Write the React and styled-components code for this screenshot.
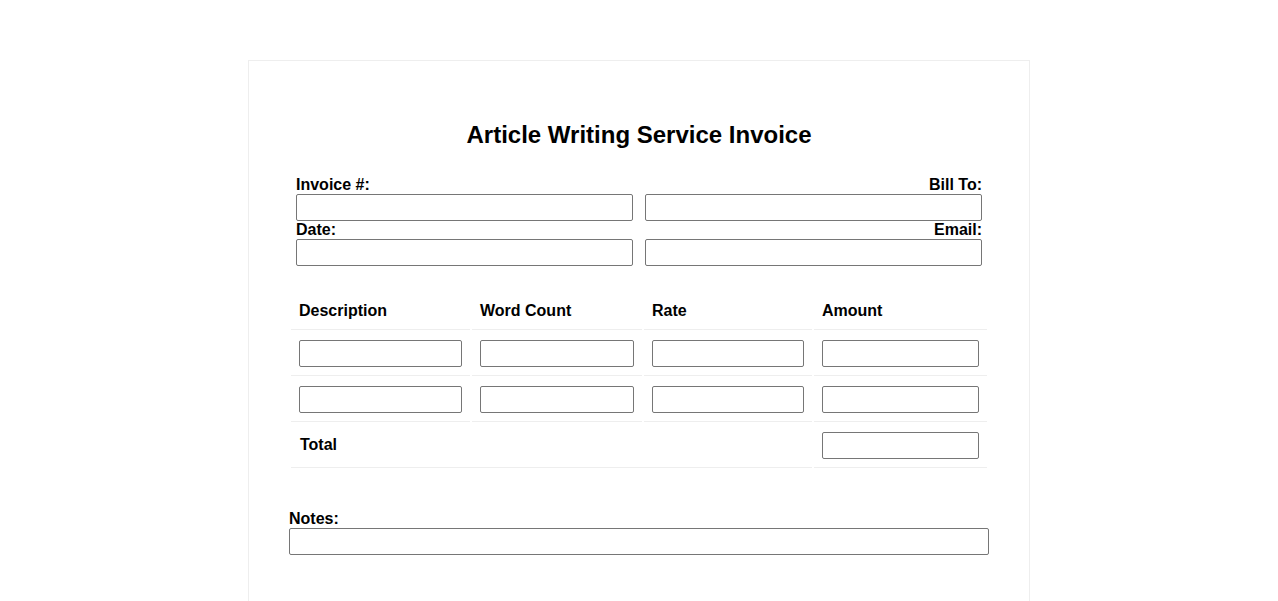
import styled, { createGlobalStyle } from 'styled-components';

const GlobalStyle = createGlobalStyle`
  body {
    margin: 0;
    background: #fff;
    font-family: "Liberation Sans", Arial, sans-serif;
    color: #000;
  }
`;

const Sheet = styled.div`
  width: 700px;
  margin: 60px auto 20px;
  padding: 40px 40px 60px;
  border: 1px solid #eee;
  background: #fff;
`;

const Title = styled.h1`
  margin: 20px 0;
  text-align: center;
  font-size: 24px;
  font-weight: bold;
  line-height: 27.6px;
`;

const Details = styled.div`
  display: grid;
  grid-template-columns: 1fr 1fr;
  column-gap: 12px;
  padding: 7px;
`;

const Field = styled.div`
  display: flex;
  flex-direction: column;
  text-align: ${(pr) => (pr.right ? 'right' : 'left')};
`;

const Label = styled.label`
  display: block;
  font-size: 16px;
  font-weight: bold;
  line-height: 18.4px;
`;

const Input = styled.input`
  display: block;
  width: 100%;
  height: 27px;
  box-sizing: border-box;
  margin: 0;
  padding: 4px 6px;
  border: 1px solid #767676;
  border-radius: 2px;
  background: #fff;
  font-family: inherit;
  font-size: 13px;
`;

const Table = styled.table`
  width: 700px;
  margin: 19px 0 40px;
  border-collapse: separate;
  border-spacing: 2px;
  table-layout: fixed;
`;

const Th = styled.th`
  width: ${(pr) => pr.w}px;
  padding: 8px;
  text-align: left;
  font-size: 16px;
  font-weight: bold;
  line-height: 18.4px;
  border-bottom: 1px solid #eee;
`;

const Td = styled.td`
  padding: 8px;
  font-size: 16px;
  line-height: 18.4px;
  vertical-align: middle;
  border-bottom: 1px solid #eee;
  font-weight: ${(pr) => (pr.bold ? 'bold' : 'normal')};
  padding-left: ${(pr) => (pr.bold ? '9px' : '8px')};
`;

const Notes = styled.div`
  display: flex;
  flex-direction: column;
`;

const columns = [
  { name: 'Description', w: 163 },
  { name: 'Word Count', w: 154 },
  { name: 'Rate', w: 152 },
  { name: 'Amount', w: 157 },
];

const App = () => {
  return (
    <>
      <GlobalStyle />
      <Sheet>
        <Title>Article Writing Service Invoice</Title>
        <Details>
          <Field>
            <Label>Invoice #:</Label>
            <Input type="text" />
          </Field>
          <Field right>
            <Label>Bill To:</Label>
            <Input type="text" />
          </Field>
          <Field>
            <Label>Date:</Label>
            <Input type="text" />
          </Field>
          <Field right>
            <Label>Email:</Label>
            <Input type="text" />
          </Field>
        </Details>
        <Table>
          <thead>
            <tr>
              {columns.map((c) => (
                <Th key={c.name} w={c.w}>{c.name}</Th>
              ))}
            </tr>
          </thead>
          <tbody>
            {[0, 1].map((r) => (
              <tr key={r}>
                {columns.map((c) => (
                  <Td key={c.name}>
                    <Input type="text" />
                  </Td>
                ))}
              </tr>
            ))}
            <tr>
              <Td bold colSpan={3}>Total</Td>
              <Td>
                <Input type="text" />
              </Td>
            </tr>
          </tbody>
        </Table>
        <Notes>
          <Label>Notes:</Label>
          <Input type="text" />
        </Notes>
      </Sheet>
    </>
  );
};

export default App;
